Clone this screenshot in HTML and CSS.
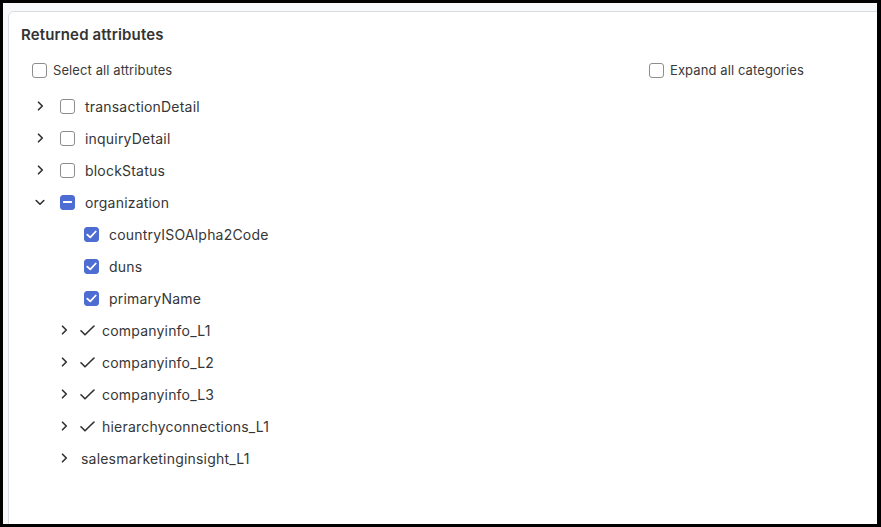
FILE: index.html
```html
<!DOCTYPE html>
<html lang="en">
<head>
<meta charset="utf-8">
<title>Returned attributes</title>
<link rel="stylesheet" href="styles.css">
</head>
<body>
<div class="frame">
  <section class="card">
    <h2 class="title">Returned attributes</h2>
    <div class="options">
      <label class="option"><span class="box"></span><span>Select all attributes</span></label>
      <label class="option"><span class="box"></span><span>Expand all categories</span></label>
    </div>
    <ul class="tree">
      <li class="row">
        <span class="chev"><svg width="7" height="10" viewBox="0 0 7 10"><path d="M1.5 1.2 L5.3 5 L1.5 8.8" fill="none" stroke="#2f2f2f" stroke-width="1.6" stroke-linecap="round" stroke-linejoin="round"/></svg></span>
        <span class="box"></span><span class="label">transactionDetail</span>
      </li>
      <li class="row">
        <span class="chev"><svg width="7" height="10" viewBox="0 0 7 10"><path d="M1.5 1.2 L5.3 5 L1.5 8.8" fill="none" stroke="#2f2f2f" stroke-width="1.6" stroke-linecap="round" stroke-linejoin="round"/></svg></span>
        <span class="box"></span><span class="label">inquiryDetail</span>
      </li>
      <li class="row">
        <span class="chev"><svg width="7" height="10" viewBox="0 0 7 10"><path d="M1.5 1.2 L5.3 5 L1.5 8.8" fill="none" stroke="#2f2f2f" stroke-width="1.6" stroke-linecap="round" stroke-linejoin="round"/></svg></span>
        <span class="box"></span><span class="label">blockStatus</span>
      </li>
      <li class="row">
        <span class="chev"><svg width="10" height="7" viewBox="0 0 10 7"><path d="M1.2 1.5 L5 5.3 L8.8 1.5" fill="none" stroke="#2f2f2f" stroke-width="1.6" stroke-linecap="round" stroke-linejoin="round"/></svg></span>
        <span class="box filled"><svg width="9" height="2" viewBox="0 0 9 2"><rect width="9" height="2" rx="0.5" fill="#fff"/></svg></span><span class="label">organization</span>
      </li>
      <li class="row level2 leaf">
        <span class="chev"></span>
        <span class="box filled"><svg width="11" height="9" viewBox="0 0 11 9"><path d="M1.3 4.6 L4.2 7.4 L9.7 1.5" fill="none" stroke="#fff" stroke-width="1.8" stroke-linecap="round" stroke-linejoin="round"/></svg></span><span class="label">countryISOAlpha2Code</span>
      </li>
      <li class="row level2 leaf">
        <span class="chev"></span>
        <span class="box filled"><svg width="11" height="9" viewBox="0 0 11 9"><path d="M1.3 4.6 L4.2 7.4 L9.7 1.5" fill="none" stroke="#fff" stroke-width="1.8" stroke-linecap="round" stroke-linejoin="round"/></svg></span><span class="label">duns</span>
      </li>
      <li class="row level2 leaf">
        <span class="chev"></span>
        <span class="box filled"><svg width="11" height="9" viewBox="0 0 11 9"><path d="M1.3 4.6 L4.2 7.4 L9.7 1.5" fill="none" stroke="#fff" stroke-width="1.8" stroke-linecap="round" stroke-linejoin="round"/></svg></span><span class="label">primaryName</span>
      </li>
      <li class="row level2">
        <span class="chev"><svg width="7" height="10" viewBox="0 0 7 10"><path d="M1.5 1.2 L5.3 5 L1.5 8.8" fill="none" stroke="#2f2f2f" stroke-width="1.6" stroke-linecap="round" stroke-linejoin="round"/></svg></span>
        <span class="tick"><svg width="15" height="11" viewBox="0 0 15 11"><path d="M1 5.8 L5 9.8 L14 1" fill="none" stroke="#2f2f2f" stroke-width="1.6" stroke-linecap="round" stroke-linejoin="round"/></svg></span><span class="label">companyinfo_L1</span>
      </li>
      <li class="row level2">
        <span class="chev"><svg width="7" height="10" viewBox="0 0 7 10"><path d="M1.5 1.2 L5.3 5 L1.5 8.8" fill="none" stroke="#2f2f2f" stroke-width="1.6" stroke-linecap="round" stroke-linejoin="round"/></svg></span>
        <span class="tick"><svg width="15" height="11" viewBox="0 0 15 11"><path d="M1 5.8 L5 9.8 L14 1" fill="none" stroke="#2f2f2f" stroke-width="1.6" stroke-linecap="round" stroke-linejoin="round"/></svg></span><span class="label">companyinfo_L2</span>
      </li>
      <li class="row level2">
        <span class="chev"><svg width="7" height="10" viewBox="0 0 7 10"><path d="M1.5 1.2 L5.3 5 L1.5 8.8" fill="none" stroke="#2f2f2f" stroke-width="1.6" stroke-linecap="round" stroke-linejoin="round"/></svg></span>
        <span class="tick"><svg width="15" height="11" viewBox="0 0 15 11"><path d="M1 5.8 L5 9.8 L14 1" fill="none" stroke="#2f2f2f" stroke-width="1.6" stroke-linecap="round" stroke-linejoin="round"/></svg></span><span class="label">companyinfo_L3</span>
      </li>
      <li class="row level2">
        <span class="chev"><svg width="7" height="10" viewBox="0 0 7 10"><path d="M1.5 1.2 L5.3 5 L1.5 8.8" fill="none" stroke="#2f2f2f" stroke-width="1.6" stroke-linecap="round" stroke-linejoin="round"/></svg></span>
        <span class="tick"><svg width="15" height="11" viewBox="0 0 15 11"><path d="M1 5.8 L5 9.8 L14 1" fill="none" stroke="#2f2f2f" stroke-width="1.6" stroke-linecap="round" stroke-linejoin="round"/></svg></span><span class="label">hierarchyconnections_L1</span>
      </li>
      <li class="row level2 plain">
        <span class="chev"><svg width="7" height="10" viewBox="0 0 7 10"><path d="M1.5 1.2 L5.3 5 L1.5 8.8" fill="none" stroke="#2f2f2f" stroke-width="1.6" stroke-linecap="round" stroke-linejoin="round"/></svg></span>
        <span class="label">salesmarketinginsight_L1</span>
      </li>
    </ul>
  </section>
</div>
</body>
</html>
```

FILE: styles.css
```css
* { box-sizing: border-box; }
html, body { margin: 0; padding: 0; }
body {
  width: 881px;
  height: 527px;
  overflow: hidden;
  background: #000;
  font-family: Inter, "Noto Sans", "Liberation Sans", sans-serif;
  color: #363636;
}
.frame {
  margin: 3px 4px 3px 3px;
  height: 521px;
  background: #f7f8fa;
  overflow: hidden;
  padding: 8px 0 0 5px;
}
.card {
  background: #fff;
  border: 1px solid #dcdde2;
  border-radius: 6px;
  width: 900px;
  height: 560px;
  padding: 13px 0 0 12px;
}
.title {
  margin: 0;
  font-size: 15px;
  line-height: 20px;
  font-weight: 600;
  letter-spacing: 0.15px;
  color: #333;
}
.options {
  display: grid;
  grid-template-columns: 617px auto;
  margin-top: 15px;
  padding-left: 11px;
}
.option {
  display: flex;
  align-items: center;
  gap: 6px;
  height: 20px;
  font-size: 13px;
  letter-spacing: 0.1px;
  color: #3a3a3a;
}
.box {
  width: 15px;
  height: 15px;
  flex: none;
  border: 1.5px solid #8d8d8d;
  border-radius: 3px;
  display: inline-flex;
  align-items: center;
  justify-content: center;
  background: #fff;
}
.box.filled {
  background: #4d6dd2;
  border-color: #4d6dd2;
}
.tree {
  list-style: none;
  margin: 10px 0 0;
  padding: 0 0 0 11px;
}
.row {
  display: flex;
  align-items: center;
  height: 32px;
  font-size: 14px;
  letter-spacing: 0.2px;
  color: #363636;
}
.chev {
  width: 16px;
  flex: none;
  display: inline-flex;
  justify-content: center;
  align-items: center;
  margin-right: 12px;
}
.chev svg { display: block; }
.row .box { margin-right: 10px; }
.level2 { padding-left: 24px; }
.tick {
  display: inline-flex;
  margin-left: -4px;
  margin-right: 7px;
}
.tick svg { display: block; }
.plain .chev { margin-right: 9px; }
.label { white-space: nowrap; }
```
